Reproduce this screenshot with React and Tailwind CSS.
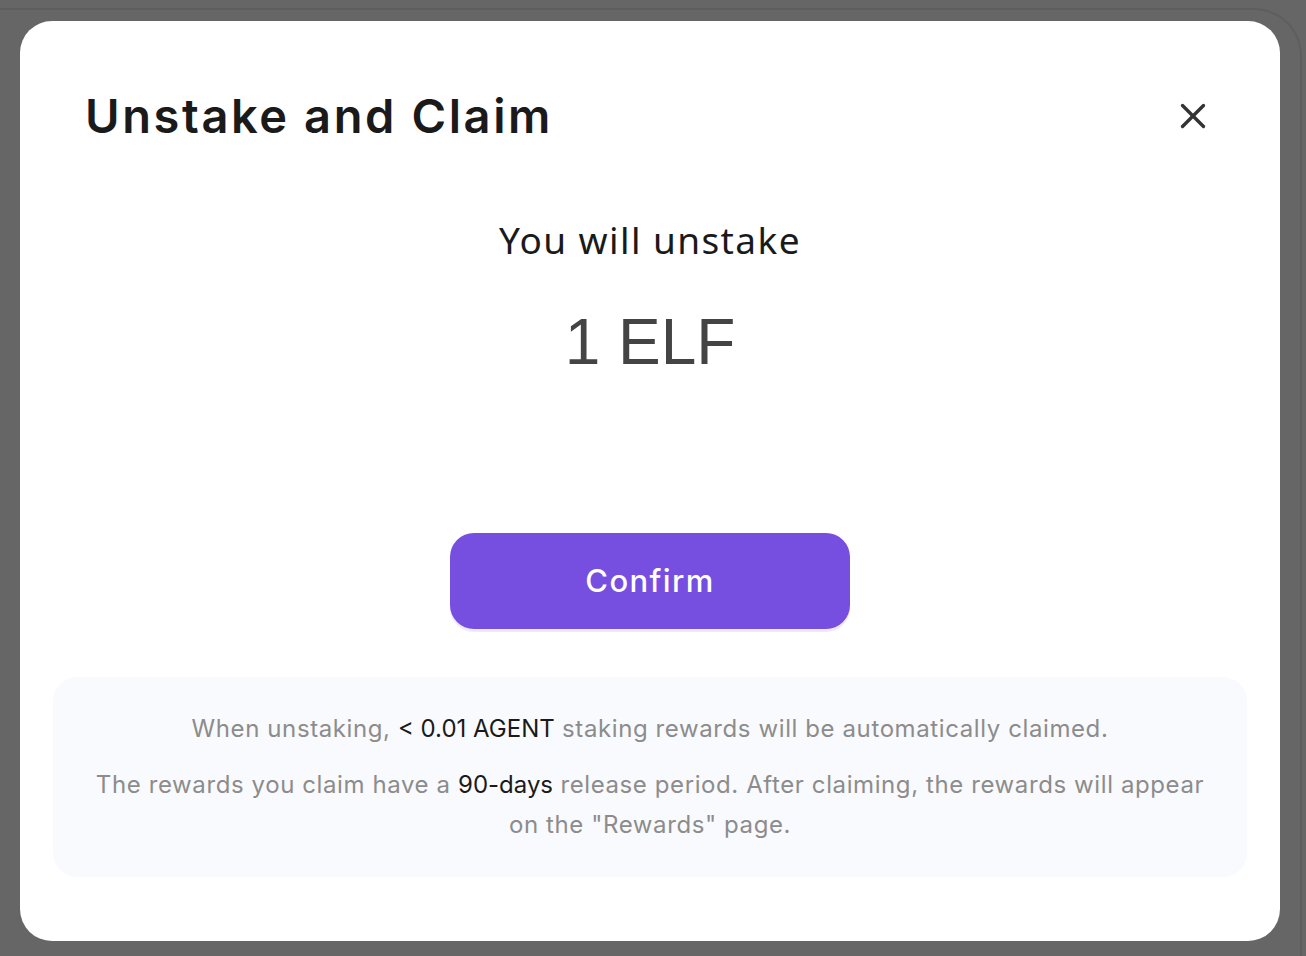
import React from "react";
import { X } from "lucide-react";

const UnstakeModal = () => {
  return (
    <div className="absolute left-[20px] top-[21px] w-[1260px] h-[920px] rounded-[32px] bg-white flex flex-col">
      <div className="flex items-center justify-between pl-[65px] pr-[66px] pt-[63px]">
        <h2 className="font-['Inter',sans-serif] font-semibold text-[47px] leading-[64px] text-[#1a1a1a] tracking-[2.6px]">
          Unstake and Claim
        </h2>
        <button className="text-[#333] w-[42px] h-[42px] flex items-center justify-center">
          <X size={42} strokeWidth={1.9} />
        </button>
      </div>

      <div className="flex flex-col items-center mt-[68px]">
        <p className="font-['Noto_Sans',sans-serif] text-[37px] leading-[48px] text-[#1a1a1a] tracking-[1.4px]">
          You will unstake
        </p>
        <p className="mt-[38px] font-['Liberation_Sans',sans-serif] text-[64px] leading-[80px] text-[#444]">
          1 ELF
        </p>
      </div>

      <div className="flex justify-center mt-[151px]">
        <button className="w-[400px] h-[96px] rounded-[24px] bg-[#764ee0] text-white font-['Inter',sans-serif] font-medium text-[31px] tracking-[1.4px] shadow-[0_3px_0_#efe9fc]">
          Confirm
        </button>
      </div>

      <div className="mx-[33px] mt-[48px] h-[200px] rounded-[24px] bg-[#f9fafd] px-[38px] pt-[32px] text-center font-['Inter',sans-serif] text-[24px] leading-[40px] text-[#8c8c8c] tracking-[0.6px]">
        <p>
          When unstaking,{" "}
          <span className="text-[#1a1a1a] tracking-normal">&lt; 0.01 AGENT</span> staking
          rewards will be automatically claimed.
        </p>
        <p className="mt-[16px]">
          The rewards you claim have a{" "}
          <span className="text-[#1a1a1a] tracking-normal">90-days</span> release period.
          After claiming, the rewards will appear on the "Rewards" page.
        </p>
      </div>
    </div>
  );
};

export default function App() {
  return (
    <div className="relative w-[1306px] h-[956px] overflow-hidden bg-[#666667]">
      <div className="ml-[-20px] mt-[8px] w-[1322px] h-[1000px] rounded-tr-[48px] border-t-2 border-r-2 border-[#5e5e5f]" />
      <UnstakeModal />
    </div>
  );
}
